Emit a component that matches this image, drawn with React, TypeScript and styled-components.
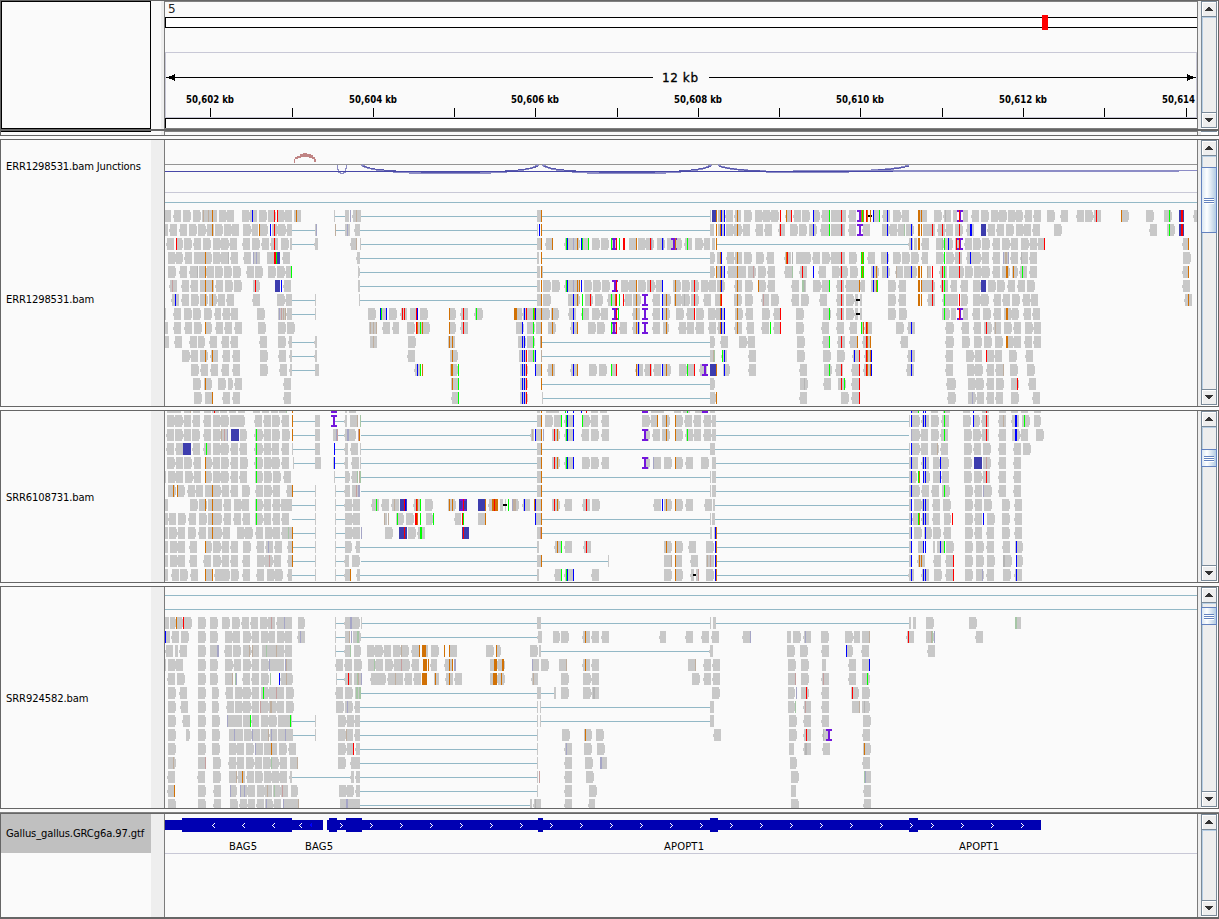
import React from "react";
import styled, { createGlobalStyle } from "styled-components";

const EDGE = "#666666";
const PAPER = "#fafafa";
const RULE = "#c8c8d6";
const ORIGIN = 165;
const WIDTH = 1032;

const GlobalStyle = createGlobalStyle`
  html, body { margin: 0; padding: 0; background: ${PAPER}; overflow: hidden; }
  * { box-sizing: border-box; }
`;

const Browser = styled.div`
  display: flex;
  flex-direction: column;
  width: 1219px;
  height: 919px;
  background: ${PAPER};
  color: #000;
  font-family: "DejaVu Sans", sans-serif;
  font-size: 10px;
`;

const Panel = styled.section<{ $height: number }>`
  display: flex;
  flex: none;
  height: ${(p) => p.$height}px;
  border-left: 1px solid ${EDGE};
  border-right: 1px solid ${EDGE};
  overflow: hidden;
`;

const Divider = styled.div<{ $double?: boolean }>`
  flex: none;
  height: ${(p) => (p.$double ? 6 : 5)}px;
  border-top: 1px solid ${EDGE};
  border-bottom: 1px solid ${EDGE};
  box-shadow: ${(p) => (p.$double ? "inset 0 -1px 0 #808080" : "none")};
`;

const Bar = styled.div<{ $size: number; $color: string }>`
  flex: none;
  height: ${(p) => p.$size}px;
  background: ${(p) => p.$color};
`;

const Names = styled.div`
  display: flex;
  flex-direction: column;
  flex: none;
  width: 150px;
`;

const EmptyName = styled.div`
  flex: 1;
  border: 1px solid #000;
`;

const Name = styled.div<{ $height?: number; $selected?: boolean; $spacing?: number; $top?: number }>`
  display: flex;
  align-items: center;
  flex: ${(p) => (p.$height ? "none" : "1")};
  height: ${(p) => (p.$height ? `${p.$height}px` : "auto")};
  padding: ${(p) => p.$top ?? 0}px 0 0 5px;
  white-space: nowrap;
  letter-spacing: ${(p) => p.$spacing ?? -0.15}px;
  background: ${(p) => (p.$selected ? "#c0c0c0" : PAPER)};
`;

const Gutter = styled.div<{ $header?: boolean }>`
  flex: none;
  width: 13px;
  background: ${(p) => (p.$header ? `linear-gradient(90deg, ${PAPER} 10px, #eeeeee 10px)` : "#eeeeee")};
`;

const Data = styled.div`
  flex: none;
  width: 1034px;
  border-left: 1px solid #7b7b7b;
  border-right: 1px solid #7b7b7b;
  background: ${PAPER};
`;

const Chart = styled.svg`
  display: block;
  font-family: "DejaVu Sans", sans-serif;
`;

const ScrollColumn = styled.div`
  display: flex;
  flex-direction: column;
  flex: 1;
  padding: 0 1px 1px 3px;
  background: linear-gradient(90deg, #eeeeee 3px, #fff 3px);
`;

const ScrollTrack = styled.div`
  display: flex;
  flex-direction: column;
  flex: 1;
  border: 1px solid #7a8a99;
  background: #eeeeee;
`;

const ScrollButton = styled.div<{ $end?: boolean }>`
  display: flex;
  align-items: center;
  justify-content: center;
  flex: none;
  height: 15px;
  border: solid #7a8a99;
  border-width: ${(p) => (p.$end ? "1px 0 0" : "0 0 1px")};
  box-shadow: inset 1px 1px 0 #fff;
  background: #eeeeee;
`;

const ScrollLane = styled.div<{ $offset: number }>`
  flex: 1;
  padding-top: ${(p) => p.$offset}px;
  border-left: 1px solid #b8cfe5;
  border-top: 1px solid #b8cfe5;
`;

const Thumb = styled.div<{ $height: number }>`
  display: flex;
  flex-direction: column;
  align-items: center;
  justify-content: center;
  gap: 1px;
  height: ${(p) => p.$height}px;
  margin: 0 -1px 0 -2px;
  border: 1px solid #6382bf;
  background: linear-gradient(90deg, #dbe7f3, #fdfeff 35%, #b8cfe5 95%);
`;

const Grip = styled.i`
  width: 10px;
  height: 1px;
  background: #6382bf;
  box-shadow: 0 1px 0 #fff;
`;

function Scroll({ offset = 0, thumb = 0 }: { offset?: number; thumb?: number }) {
  return (
    <ScrollColumn>
      <ScrollTrack>
        <ScrollButton>
          <svg width="8" height="4" shapeRendering="crispEdges"><path d="M3 0h2v1h1v1h1v1h1v1H0V3h1V2h1V1h1z" fill="#333" /></svg>
        </ScrollButton>
        <ScrollLane $offset={offset}>
          {thumb > 0 && (
            <Thumb $height={thumb}>
              <Grip />
              <Grip />
              <Grip />
            </Thumb>
          )}
        </ScrollLane>
        <ScrollButton $end>
          <svg width="8" height="4" shapeRendering="crispEdges"><path d="M0 0h8v1H7v1H6v1H5v1H3V3H2V2H1V1H0z" fill="#333" /></svg>
        </ScrollButton>
      </ScrollTrack>
    </ScrollColumn>
  );
}

/*
 * Alignment rows. A token is a kind, a position and an optional width:
 *   r / l  forward or reverse read     p  read fragment     =  spliced gap
 *   O B G R  mismatched base           t v e k h  low quality base
 *   N  odd mate pair                   I  insertion         D  deletion
 */
const COLORS: Record<string, string> = {
  "=": "#93b8c6", r: "#c8c8c8", l: "#c8c8c8", p: "#c8c8c8", N: "#3d3dae",
  O: "#d17105", B: "#0000ff", G: "#00ff00", R: "#ff0000",
  t: "#bfae9e", v: "#a5a5c6", e: "#a5c6a5", k: "#c69e9e", h: "#b4b4b4",
  I: "#7316dc", D: "#000000",
};
const LAYERS = ["=", "rlp", "N", "tvekh", "D", "I", "OBGR"];

function paths(rows: string[], top: number) {
  const out: Record<string, string> = {};
  const rect = (key: string, x: number, y: number, w: number, h: number) => {
    out[key] = (out[key] ?? "") + `M${x} ${y}h${w}v${h}h${-w}z`;
  };
  rows.forEach((row, i) => {
    const y = top + i * 14;
    row.split(/\s+/).filter(Boolean).forEach((token) => {
      const k = token[0];
      const [x, w] = token.slice(1).split(":").map(Number);
      if (k === "=") rect(k, x, y + 6, w || 23, 1);
      else if (k === "D") rect(k, x, y + 5, w || 4, 2);
      else if (k === "I") {
        rect(k, x, y, 6, 2);
        rect(k, x + 2, y + 2, 2, 8);
        rect(k, x, y + 10, 6, 2);
      } else {
        const wide = k === "r" || k === "l" || k === "N";
        const width = w || (wide ? 7 : 1);
        rect(k, x, y, width, 12);
        if (k === "r") rect(k, x + width, y + 2, 1, 8);
        if (k === "l") rect(k, x - 1, y + 5, 1, 3);
      }
    });
  });
  return out;
}

function Reads({ rows, top }: { rows: string[]; top: number }) {
  const drawn = paths(rows, top);
  return (
    <g>
      {LAYERS.flatMap((layer) => layer.split("")).map((k) =>
        drawn[k] ? <path key={k} d={drawn[k]} fill={COLORS[k]} /> : null
      )}
    </g>
  );
}

const ERR1298531 = [
  "p165:6 l174 r183 r193 p202:8 t203 t208 l210 O212 r219 l227 r242 l250 B252 r259 r268 R274 r278:6 R277 l285 p294:1 l295:6 O296 p334:1 =335:10 p345:4 v350 l353:7 t356 p360:1 =361:176 p537:4 O541 =542:168 p710:1 N712:4 O716 p718:2 O720 B721 p722:2 B724 l726 l735:6 O737 r744 r755 r763 r771 R780 l786:6 O786 R791 l794 r802 B813 r814:5 l822 G829 r831 l838 R841 p842:4 l849 I857 O861 G862 O863 R866 O867 D868:4 O870 l874:5 B873 G879 l883 B887 r893 l902 O918:2 p920:1 O921 l922:5 r934 l944 h945 p953:4 I957 R959 p963:5 l972 r981 r991 r999 r1008 r1016:6 l1025 l1034 r1047 l1061 l1077 r1085 l1094 R1096 O1121 r1122:6 r1146 r1164 G1169 N1179:5 R1181:2 l1194:3",
  "p165:3 l170 l180 r189 r198 l207 O212 r215 r224 l232 r243 l252:6 O259 r260 B270 r272:5 R274 r278 l287:5 =292:23 p315:1 v316 t335 =336:9 p345:5 v347 l355:5 =360:177 p537:1 B539 O541 =542:168 p710:4 O716 p718:2 O720 B721 p722:2 B724 r726 r734 O737 l743 l756 l765 l779:6 R780 r790 r799 r809 B813 l821 r826:3 G829 r831 l838 R841 v842 l849 I857 l863 r882 B887 l890 l898 e904 r906 B911 p912 O918:2 O921 r923:5 l928 R932 l938 R942 l946 r955 R959 l967 B970:2 N981:5 l988 l997 r1006 r1016 l1024 l1033 r1054 l1150 r1167 G1169 N1179:5 R1181:2",
  "l167 R176 r177:5 r184 l194 r203 r213 r221 l230 l243 r252 l262 l271 R274 r281 p290:2 =292:23 l315:3 l351:6 t356 p360:1 =361:176 p537:4 O541 l546:6 O552 l565 G566 B567 r568:5 v573 r574:5 O577 B581 G582 r583:5 G588 r592 r601 p611:6 G611 I611 R616 G619 R623:2 r629 O636 r638 r646 R650 v651 r657 B662 v663 r667 I671 O675 r676:5 l685 G687 r695 l704:6 p712:3 O716 =717:193 l909:4 B911 p914:3 O918:2 l922 r936 e942 G944 r945 B948 p955:4 R956 I957 R959 l965 r973 r982 l993 r1002 l1011 r1021 l1030 l1038:6 R1044 l1183:6 O1188",
  "r168 r176:6 l185 r194 r201:4 O205 r206:5 r213 r221 h228 l231 l244 p253:7 v253 v256 r267:7 R274 R275 N276:4 G276 l283 l357:3 =360:177 p537:2 O541 =542:168 r710:4 r717:3 O720 B721 l727 l735 O737 r744 r756 l767 l785:6 O786 R787 h792 r796 r803 l813 r822 l831 l838 R841 r849 G861 O862 G863 l868 r881 B887 r893 r902 r911 l922:6 r936 G944 r946 l955 R959 l967 B970 r973 l982 l993 p1003:6 v1003 v1008 t1005:2 l1011 l1021 h1021 l1030 r1183",
  "r168 l180 l190 h197 r199 O205 l207 r215 r224 r233 l247 r255 r268 r277 l286:5 G291 r358:1 =360:177 p537:3 O541 p542:1 =543:167 r710:4 O716 r717:3 O720 B721 p722:2 B724 l728 r735 O737 l739 r748 k753 r758 l768 l785 e792 l800 R802 B813 l819 r832 r840 R841 r850 G861 O862 G863 r871 B873 O876 r882 B887 t896 l896 r904 r909 B911 O918:2 O921 p927:4 t927 R932 l940 R942 G944 r949 r956 R959 r965 r974 r982 l993 r1002 O1006:2 r1012:5 O1013 l1020 G1022 l1030 l1183:6 O1188",
  "l170 k172 l182 l191 r200 O205 l207 O212 l216 r225 r234 r253:6 R255 N275:5 B281 l284 p358:2 =360:177 p537:3 O541 r543 r552 l565 G566 B567 r568:5 p573:6 v573 O577 O579 B581 r584 r593 r602 I612 R616 r621 r629 O636 r638 r647 R650 l656 B662 r673 O675 r682 r691 R694 r701 l709 r717 O720 B721 l735 O737 r745 O758 r759:6 l768 l792 e802:2 h804 p802:4 r813 l822 G829 l837 R841 l846 r853 O859 l861:4 p871:5 B873 O876 G877 r888 l899 O918:2 O921 r922 r927 R932 l941 R942 G944 l951:6 l961 r973 N981:5 r988 r997 l1008 l1018 r1027 l1183",
  "l172 B175 l182 r191 r200 O205 r209 O212 l218 l227 l253 r277 l286:6 =292:23 p315:1 p359:1 =360:177 p537:4 O541 r543 r568:5 B573 r574:5 O577 G582 r585 R590 r595 l608 G611 O615 R616 G619 R623 l625 r633 O636 I642 l653 B662 r663 O666 r674 O675 r682 h684 r691 R694 l704 r715:5 O720 R721 r734 O737 r745 l762 k763 r771 l792 r801 l820 l837 R841 r846 l855:3 D856:4 p860:2 r888 l899 O918:2 O921 l928 R932 l943:8 G944 l951 r961:6 R959 r973 r981 l994 l1003 r1012 l1023 l1031 l1185 O1188",
  "p165:1 l174 r184 r193 r204 l215:6 l223 l231 r257 p278:8 v279 k281 t283 t285 l287:5 =292:23 p315:1 r368 B380 G381 p382:4 B386 r389 l401:6 R402 R404 r410:6 R416 B417 r420 O449 r450:5 l461 R463 l475 G476 r477:5 O514:3 p517:5 l523:6 B524 R526 r528:5 G533 O534 B535 r536:5 O541 r542 O552 r551 l569 B573 G582 l582 r592 l601 I612 R616 G618 l633 O636 I642 l653 B662 r663:6 O666 r676 l687 R694 r696 r708 r716 O720 B721 p722:2 B724 r735 O737 l746 r762 R780 l774 r796 r823 G829 R841 l837 r846 l855:3 D856:4 p860:2 r888 r899 r942 G944 p951:5 I957 R959 p963:5 l973 r983 l994 O1006:2 r1004 r1012:6 l1024 l1033",
  "p165:3 l174 l185 r194 O205 r206:5 l216 l225 l235 r258 r278 r287 p369:7 t370 t373 t376 l383 l393:6 r407 p416:6 R416 O417 G420 O422 r423:6 O449 r450:5 l461 R463 r516 B522 r527 G533 r536:5 O541 r548 O552 l571 B573 O577 r588 r597 p611:6 G611 I611 R616 l620 l633 O636 B638 I642 l653 O666 r663:5 l679 l687 l696 l700:4 l709 l718 O720 B721 B724 l735 O737 l747 l762 G770 R780 l774 r796 l822 l837 l850 G861 p862:2 O863 l865 R866 O867 r896 B911 l908 l946 r950:3 l962 l974 r984 R986 l994 t995 r1004 l1014 r1025 l1034",
  "p165:4 l175 l190 r198:6 l210 l222 l231 l260 r278 l289:3 =292:23 l315:2 p370:7 t373 r408 p448:7 O449 O452 r518 B522 B524 r527 G533 O541 t540 =542:168 r710:4 l721 r739 l748 r797 l823 G829 R841 l838 l850 O857 l863 R866 O867 O870 l901 l946 r950:3 r962 r974 r984 r995 O1006:2 r1008:5 l1014 l1025 l1034",
  "r182 l191 r200 O205 O212 l211 l223 l233 r260 l279 l290:2 =292:23 l315:2 l408 O452 r450 B522 B524 R526 r519 G533 B535 r528 t541 =542:168 p710:3 t713 e714 l722:5 G722 B724 l749 r797 r823 r837 B854 l853 R859 l865 R866 O867 O870 B871 B911 l908 l946 p950:3 r966 l975 R986 l987 l995 r1009 l1026",
  "r191 l201 l211 l222 l233 r260 l280 l290:2 =292:23 p315:4 l415:6 B417 G420 O422 r450 O451:2 G458 r520 B522 B524 R526 r536:5 B535 O541 l548 O552 l571 B573 O577 r589 r599 p611:6 G611 R616 l636 O636 B638 l645 R650 l654 B662 r663 O666 r679 l687 G687 R694 l700 I702 N710:6 O716 B724 r723:6 l749 l800 r824 G829 R841 l836 l852 R859 l864 R866 O867 O870 B871 B911 l907 l946 p950:3 r967 r975 l987 l996 t1003 r1010 r1027",
  "r193 O205 r204 r218 r228:4 l235 l284 O452 r451 G458 B522 B524 R526 r520 O541 =542:168 r710:4 r800 h804 l824 R841 G844 r838 l852 R859 l947 r950:5 r968 r976 l987 r996 r1011 R1017 l1029",
  "r194 r205 O212 l223 l233 l284 l452 G458 r520 B522 B524 R526 p542:1 =543:167 r710:5 O716 l800 r841 l852 R859 l948 r950:5 r968 v972 l977 l987 l996 r1011 l1033",
];

const SRR6108731 = [
  "l167 r174 l184 t190 l193 l204 l212 R214 r220 l229 l238 l253 l262 l271 l279 e286 O292 I331 l345:2 r349 p537:3 O541 l546 r552 G565 B567 B573 B581 R586 l591 r600 I642 r651 l657 r674 r683 G687 I702 r695 p710:5 B911 r912 G918 B923 B925 r931 G944 l943 r963 B973 R986 l982 r999 r1011 r1021 l1034",
  "r167 r175 l184 l193 l204 r213 r221 r230 r237 l255 l264 r272 l282 O292 =293:22 p315:5 I331 =335:10 l345:2 r350 t357 e360 =361:176 p537:4 O541 r545 r554 G561 l565 G566 B567 r568:5 B573 G582 r583:6 l591 l602 r642 l651 O657 r662 O666 O675 r676:6 l685 l694 l704 l712:4 =716:193 p909:1 B911 r912 l922 B923 B925 r931 l942 G944 r963 B973 r974:5 l982 R986 l999 t1003 l1012 B1015:2 r1022 G1024 r1034:6",
  "l167 r175 l184 r192 l204 r213 p221:7 t221 k224 v227 N231 N238:1 r240:6 l255 G256 r257:5 l264 r272 r282 O292 =293:22 p315:5 p333:5 v336 k337 =338:7 l345:3 v347:2 r349:6 O359 k358 =361:170 l531:3 t532 B535 r536:5 O541 v543 r552 R554 O557 l565 G566 B567 r568:5 B573 l582 r591 l602 I642 r644:5 l653 r662 O666 O675 r676:6 l686 G687 l694 l704 l712:4 =716:193 v911 r912 l921 r931 l941 G944 r964 r973 l982 R986 l999 r1012 B1015:2 l1021 r1036",
  "l167 l176 N184 N183:1 l193 l204 G206 r213 r221 l231 l240 l255 G256 r257:5 l264 l272 l282 p292:1 =293:22 p315:5 B334 =335:10 l345:3 l351 p360:1 =361:176 p537:4 O541 =542:168 p710:5 =715:194 p909:1 B911 r912 l921 r931 t937 l941 r964 l974 r983 l999 l1014 r1023",
  "r167 l176 r184 l194 O205 r206:5 l213 r221 l231 r240 l255 G256 r257:5 r264 r272 l282 p293:1 =294:21 p315:6 p333:1 B334 =335:10 l345:3 l352 p360:1 =361:176 p537:4 O541 r552 R554 O557 l565 G566 B567 r568:5 B573 r582 r591 l602 I642 r644:5 v653 l654 r664 O675 r676:6 l686 r701 p712:4 =716:193 p909:9 B911 l922 B923 B925 r933:6 B940 r941 r964 N974:8 k986 r983 l999 l1014",
  "p165:1 r168 l176 r185 l194 O205 r206:5 r213 r221 l231 l240 G256 r255 r264 r273 l284 p334:1 =335:10 r345:4 l352:6 e357 t359 e360 =361:176 p537:4 O541 =542:168 p710:1 p712:4 =716:193 r909 B911 G918 O919 r923:6 B923 B925 r933 B940 l942 r964 r974 R986 l983 l999 l1014",
  "r168 O173 O177 r178:6 l188 l196 r205 O212 r213 l222 l231 r242 l256 r264 l273 l287:5 O292 =293:22 p315:1 p335:1 =336:9 l345:5 p352:8 k356 v358:2 =361:176 p537:4 O541 =542:168 p710:1 p712:4 =716:193 p909:2 B911 r912 l922 l932 G944 r942 r965 l975 v983 r984 l999 l1014",
  "p165:3 r190 r199 O205 O212 r208 l215 l224 r234 l242 G256 r255 l264 l273 l281 l287:5 =292:23 p315:1 p335:1 =336:9 l345 l353 l372 G376 l382 l392 t394 N400:7 R404 B405 l414 R416 O417 G420 r425 r448 O449 O452 N459 I460 R463 N466:1 N478:7 O485 l489:4 O492:6 R494 p500:3 D503:4 G508 p505:1 v512 t513:3 r513:5 l523 B524 O534 B535 r536:5 O541 r552 R554 O557 l565 l583 R586 r592 l654 B662 r664 O666 O675 r676:6 l686 l705 p713:2 =715:194 p909:2 B911 r914 B923 B925 l922 l933 r943 r965 l975 r984 r1002 l1015",
  "p165:3 l169 r178 l189 r199 O212 r208 r214 l224 l234 l243 G256 r255 l264 l273 l282 =292:23 p315:1 p335:1 =336:9 r345 l353 p384:3 t384 t388 G397 r396 r406 R415:2 O417 G420 r426:6 G433 l455:6 R462 G463 r478:7 O485 B535 r536:5 O541 =542:168 p710:1 p712:3 =715:194 p909:2 B911 l913 G918 O919 l922 B923 B925 l933 r944:6 R952 r965 l975 B983 r987 r1002 l1015",
  "p165:3 r169 l178 r188 l199 O212 r208 r214 l223 r237 r245 l256 r265 l273 l282 e288 p289:3 O292 =293:22 p315:1 p335:1 =336:9 r345 l353 v361 r385 N399:8 R404 r408 l418 G420:2 N462:7 R463 r537:3 k540 O541 =542:168 p710:2 p714:1 B715 O716 =717:192 p909:2 B911 r914 B925 r924 r933 l944 r965 l975 l987 r1002 l1015",
  "p165:3 r170 l178 l190 O205 r206:5 r213 l222 l231 r243 l257 v268 l266 l275 l288:4 O292 =293:22 p315:1 p335:1 =336:9 r345:6 l356:4 =360:177 p537:2 l555 O557 G561 l565 l584 R586 r664 O666 O675 r676:6 l689 r706 B715 O716 =717:192 p909:3 B911 p918:5 B923 B925 p933:2 B940 G944 r937 r946 r965 r976 l987 l1003 B1016 r1015",
  "p165:3 r170 l178 l190 l204 r213 l222 l231 l243 r257 k269 r265 l274 l288:4 O292 =293:22 p315:1 p335:1 =336:9 l345:4 r352 =361:176 p537:4 O541 =542:66 p608:1 r664 t671 O675 l676:6 l691 p706:8 t707 k710 B715 O716 =717:192 p909:3 B911 l918 O919 O921 l934 l946 R953 r965 r976 r987 h1003:2 r1004 B1016 r1016:6",
  "p165:3 l172 r180 l191 O205 O212 r205 l215 r222 r231 l243 l257 r267 r275 l288:4 =292:23 p315:1 p335:1 =336:9 l345:6 O350 l357:3 =360:177 p537:2 l555:6 G561 l565 G566 B567 r568:5 B573 l592 r664 O675 r676:6 l691:3 D693:3 r696:2 k698 r706 B715 O716 =717:192 l909:5 B911 B923 B925 l922 r934 l946 R953 r965 v982 r976 l987 r1003 B1016 l1015",
];

const SRR924582 = [
  "p165:4 r170:5 O176 r177:5 R183 r184 r198 r210 r222 r232 l242 l251 r260 l268 k271 l277 v284 l285 r298:6 p335:1 =336:9 l345:5 v350:2 r352 p361:1 =362:175 p537:4 =541:169 p710:1 p713:3 =716:193 p909:2 p913:3 r926 r969 l1016:5 e1015:2",
  "B165 l166:4 l172 r181 r198 r210 r225 l233 r243 l252 r261 l269:6 r277 l285 l298 v300 p335:1 =336:9 p345:4 t349 v351 r353 e357:2 =361:176 l538:4 r553:6 r561 l583 O585 l592 l602 l660:6 l686 l702 l712 l743 v750 p787:4 r793 v805 l804 r821 r845 l854:6 r862 t869 l907 R908 r926 t931 e932 v934 l976",
  "l166 p175:3 l180 r198 r210 v217:2 l225 r233 r243 t249 t252 l252 e266 r262 l269 t276 l277 l285 p335:1 =336:9 l345:5 e350 r354:6 r367 r375 l384 r393 t401 r402:6 l412 O419 O422:4 p426:2 r431 O444 O449 l450 r486 O496 r497:3 r530 p539:2 =541:169 l710:3 r787 r800 l822 B846 r846:6 l862 l928",
  "p165:1 r168 l176 r198 r210 r225 l234 r243 l252 r261 v269 l270 l277 v285 t286 l287:5 l336 l345 r354 r368 e374 l376 r385 l394 k401 r402 l412 O423:4 O428 l431:6 O449 O452 v454:2 l445:7 r490 O494:3 O502:2 r498:6 v532 l533:6 r541 r559 t566 l583 O585 l592 r688 t695 l704 l713 r788 r801 p822:4 l849 r862 B869",
  "l168 r177 r198 r210 r225 t232 e235 v236 l243 l252 r261 e270 B279 l281 t286 r287:5 p336:1 =337:8 l345 R348 p354:7 e357 t358 v361 l371 r378 l388 t395 l396 l405 l414 O422:5 p434:5 O435 l446 O449 l455 r490 O493:4 O501 r498:6 l532:6 t533 r561 r583 l592 r692 l704 l713 r788 k795 r801 l822 k823 l849 r862 G867",
  "r168 l180 r198 r212:6 l226 r235 r243 l252 G263 r261 k276 r269 l277 r286 l336 r345 p355:5 e356:2 e359:2 =361:176 p537:4 =541:13 p554:2 r561 r583 l592 h593:2 r712 r788:6 v796 r801 R806 l822 R852 r851 r862",
  "r168 l181 r198 r212:6 l227 r235 r243 l252 k260 r261 t270:2 r269 l277 r286 r336 v347 r345 l355:5 =360:177 p537:1 p540:1 =541:169 p710:4 r788:6 e795 l804 k805 l822 r852 t859 r862 h864",
  "r168 l183 r198 r212 v227 l228 l235 G250 r243 l252 r261 r269 r278 G290 l285 =292:23 p315:1 r338 l347 l355:5 =360:177 p537:1 p540:1 =541:169 p710:4 r789 l804 l822 r863",
  "r168 r186:3 r198 r212 r229 v234 l236 r244 v252 l253 r261 t268 v271 l270 r278 v285 l286 =292:23 p315:1 r338 t346 l347:6 l355:5 =360:177 p537:1 r562 O585 r584 r596 l714 r789 R806 l804 l823 h823 I826 l863",
  "r168 r198 r212 r229 l237 r246 v255 l256 r264 O271 l270 r279 l289 r338 R353 l347 l356:4 =360:177 p537:1 l565 v566 r584 r597 p789:5 l804 h805:2 l823 r863 O864",
  "r168 t173 r198 k205 r213 l229 l237 r246 l255 r263 e271 r271 l280 r290 t297 r338 l351 l356:4 =360:177 p537:1 l565 r585 v600:2 l602:5 r790:6 l863",
  "l168 l198 r213 r229 t236 O242 l238 l247 r255 r264 r272 l280 l290:2 =292:59 l351:3 l356:4 =360:177 p537:1 k539 l565 r586 r791 e864 v865 l866:5",
  "l168:6 O174 r198 l214 v230 r231:5 v240 v244 r240 l248 r257 l265 t267 e274 r273 k282 l281 r291:6 r339 r347:6 l356:4 =360:177 p537:1 l565 r589 p791:5 l864",
  "r168 r198 l214 r230 l240 l248 l257 v266 r265 l274 v283 l284 l291 t298 r340 v346:2 l347 l353 =360:170 p530:2 h535 l534 l565 l589:6 r791 l864",
];

const KB_LABELS = [
  [210, "50,602 kb"], [373, "50,604 kb"], [535, "50,606 kb"], [698, "50,608 kb"],
  [860, "50,610 kb"], [1023, "50,612 kb"],
] as const;
const TICKS = [210, 292, 373, 454, 535, 617, 698, 779, 860, 942, 1023, 1104, 1186];

function Ruler() {
  return (
    <g>
      <rect x={164} y={1} width={1034} height={1} fill="#808080" />
      <text x={168} y={13} fontSize={12} fill="#222">5</text>
      <rect x={165.5} y={17.5} width={1040} height={10} fill="#fff" stroke="#000" />
      <rect x={1042} y={15} width={6} height={15} fill="#ff0000" />
      <rect x={165.5} y={52.5} width={1031} height={65} fill="none" stroke={RULE} />
      <path d="M166 77h487v1H166zM709 77h487v1H709z" />
      <path d="M167 77.5L175 74v7zM1195 77.5L1187 74v7z" />
      <text x={680} y={82} fontSize={12} textAnchor="middle" textLength={36} stroke="#000" strokeWidth={0.3}>12 kb</text>
      {TICKS.map((x) => <rect key={x} x={x} y={108} width={1} height={9} />)}
      {KB_LABELS.map(([x, label]) => (
        <text key={x} x={x} y={103} fontSize={10} fontWeight={700} textAnchor="middle" textLength={48} lengthAdjust="spacingAndGlyphs">{label}</text>
      ))}
      <text x={1162} y={103} fontSize={10} fontWeight={700} textLength={33} lengthAdjust="spacingAndGlyphs">50,614</text>
      <rect x={165.5} y={118.5} width={1040} height={14} fill="#fff" stroke="#000" />
      <rect x={164} y={128} width={1034} height={1} fill="#808080" />
    </g>
  );
}

function Arcs() {
  return (
    <g>
      <rect x={165} y={164} width={WIDTH} height={1} fill="#949494" />
      <path d="M294 163v-4h1v-2h2v-1h3v-2h3v-1h4v1h4v1h2v2h2v2h1v3h-2v-3h-2v-1h-3v-1h-8v1h-3v1h-3v4z" fill="#c08484" />
      <path d="M337.5 165v4h1v3h2v1h3v-1h2v-4h1v-3" fill="none" stroke="#8c8cc4" />
      <g fill="none" stroke="#8c8cc6" strokeWidth={2}>
        <path d="M362 165Q370 173 450 173.500Q530 173 538 165" />
        <path d="M543 165Q551 173 626 173.500Q703 173 711 165" />
        <path d="M718 165Q728 172 812 172.500Q900 171 909 165" />
      </g>
      <g fill="none" stroke="#5757ad" strokeWidth={1}>
        <path d="M363 166Q375 172 450 172.500Q527 172 538 166" />
        <path d="M544 166Q555 172 626 172.500Q700 172 711 166" />
        <path d="M719 166Q735 172 812 172Q895 171 909 166" />
      </g>
      <path d="M793 170h404v1h-18v1H793z" fill="#8c8cc6" />
      <rect x={165} y={171} width={728} height={1} fill="#4848a8" />
      <rect x={165} y={192} width={WIDTH} height={1} fill={RULE} />
      <rect x={165} y={202} width={WIDTH} height={1} fill="#93b8c6" />
    </g>
  );
}

const EXONS = [[182, 110], [329, 8], [346, 16], [538, 5], [710, 8], [909, 9]];
const REVERSE = [212, 242, 272, 299];
const FORWARD = [340, 370, 400, 430, 460, 490, 520, 550, 580, 610, 640, 670, 700, 730, 760, 790, 820, 850, 880, 910, 931, 961, 991, 1021];
const GENES = [[243, "BAG5", 28], [319, "BAG5", 28], [684, "APOPT1", 40], [979, "APOPT1", 40]] as const;

function Genes() {
  return (
    <g>
      <path d="M165 820h158v10H165zM327 820h714v10H327z" fill="#0000b2" />
      {EXONS.map(([x, w]) => <rect key={x} x={x} y={818} width={w} height={14} fill="#0000b2" />)}
      <path d="M309 825l3-2v4z" fill="#0000ff" />
      <path
        d={[...REVERSE.map((x) => `M${x + 2} 823h1v1h-1v1h-1v1h1v1h1v1h-1v-1h-1v-1h-1v-1h1v-1h1z`),
          ...FORWARD.map((x) => `M${x} 823h1v1h1v1h1v1h-1v1h-1v1h-1v-1h1v-1h1v-1h-1v-1h-1z`)].join("")}
        fill="#fff"
      />
      {GENES.map(([x, name, w]) => (
        <text key={x} x={x} y={850} fontSize={10} textAnchor="middle" textLength={w}>{name}</text>
      ))}
      <rect x={165} y={853} width={WIDTH} height={1} fill={RULE} />
    </g>
  );
}

function TrackChart({ top, height, children }: { top: number; height: number; children: React.ReactNode }) {
  return (
    <Chart width={WIDTH} height={height} viewBox={`${ORIGIN} ${top} ${WIDTH} ${height}`} shapeRendering="crispEdges">
      {children}
    </Chart>
  );
}

export default function App() {
  return (
    <>
      <GlobalStyle />
      <Browser>
        <Bar $size={1} $color={EDGE} />
        <Panel $height={128}>
          <Names><EmptyName /></Names>
          <Gutter $header />
          <Data>
            <TrackChart top={1} height={128}><Ruler /></TrackChart>
          </Data>
          <Scroll />
        </Panel>
        <Bar $size={2} $color={EDGE} />
        <Panel $height={4}>
          <Names><Bar $size={1} $color="#000" /></Names>
          <Gutter $header />
          <Data><Bar $size={1} $color="#808080" /></Data>
          <ScrollColumn><Bar $size={1} $color="#7a8a99" /></ScrollColumn>
        </Panel>
        <Divider />
        <Panel $height={266}>
          <Names>
            <Name $height={53} $spacing={-0.17}>ERR1298531.bam Junctions</Name>
            <Name>ERR1298531.bam</Name>
          </Names>
          <Gutter />
          <Data>
            <TrackChart top={140} height={266}>
              <Arcs />
              <Reads rows={ERR1298531} top={210} />
            </TrackChart>
          </Data>
          <Scroll offset={10} thumb={66} />
        </Panel>
        <Divider />
        <Panel $height={171}>
          <Names><Name $top={2}>SRR6108731.bam</Name></Names>
          <Gutter />
          <Data>
            <TrackChart top={411} height={171}><Reads rows={SRR6108731} top={401} /></TrackChart>
          </Data>
          <Scroll offset={21} thumb={18} />
        </Panel>
        <Divider />
        <Panel $height={221}>
          <Names><Name $top={2} $spacing={-0.1}>SRR924582.bam</Name></Names>
          <Gutter />
          <Data>
            <TrackChart top={587} height={221}>
              <path d="M165 595h1032v1H165zM165 609h1032v1H165z" fill="#93b8c6" />
              <Reads rows={SRR924582} top={617} />
            </TrackChart>
          </Data>
          <Scroll offset={3} thumb={18} />
        </Panel>
        <Divider $double />
        <Panel $height={103}>
          <Names><Name $height={39} $selected $spacing={-0.13}>Gallus_gallus.GRCg6a.97.gtf</Name></Names>
          <Gutter />
          <Data>
            <TrackChart top={814} height={103}><Genes /></TrackChart>
          </Data>
          <Scroll />
        </Panel>
        <Bar $size={2} $color={EDGE} />
      </Browser>
    </>
  );
}
